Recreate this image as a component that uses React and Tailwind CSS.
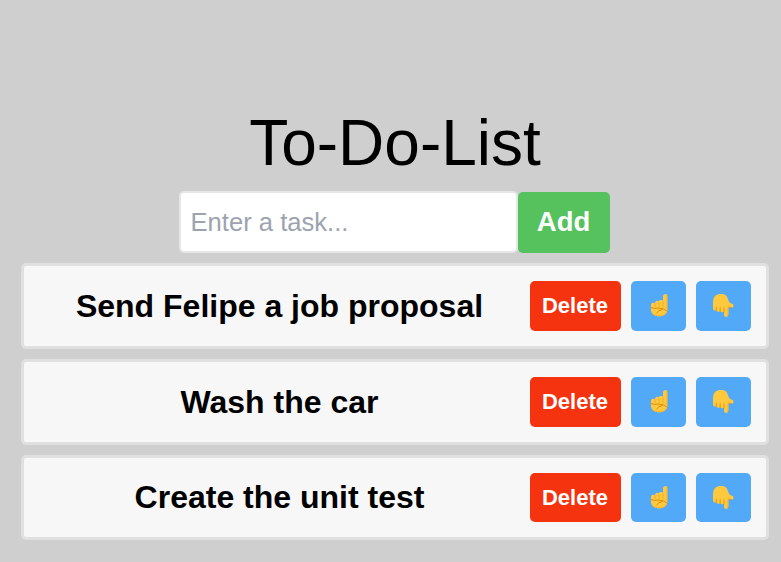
const tasks = [
  { text: "Send Felipe a job proposal", card: "h-[86px]", label: "leading-[48px]", remove: "pb-[2px]" },
  { text: "Wash the car", card: "h-[86px]", label: "leading-[48px]", remove: "pb-[2px]" },
  { text: "Create the unit test", card: "h-[85px]", label: "leading-[48px] pb-px", remove: "pb-0" },
];

function HandUp() {
  return (
    <svg className="h-[23px] w-[17px]" viewBox="0 0 51 69" aria-hidden="true">
      <path d="M36 6Q37 0 43 0Q49 0 49 6V46C49 60 39 67 25 67C10 67 0 60 0 46V32Q0 26 6 26Q10 26 12 28Q12 20 18 20Q22 20 24 22Q24 18 30 18Q34 18 36 20Z" fill="#ffc83d" />
      <path d="M46 1Q49 2 49 7V46C49 60 39 67 25 67C12 67 4 62 1 54C6 61 14 64 24 64C38 64 46 57 46 45Z" fill="#f5b82e" />
      <path d="M12 30V40M24 25V40M36 23V40" fill="none" stroke="#e59a18" strokeWidth="1.800" />
      <path d="M1 41Q11 45 22 42L38 45Q43 46 45 50M34 46Q23 48 17 57" fill="none" stroke="#d67d00" strokeWidth="2.4" strokeLinecap="round" />
    </svg>
  );
}

function HandDown() {
  return (
    <svg className="h-[23px] w-[21px]" viewBox="0 0 63 69" aria-hidden="true">
      <path d="M0 23C1 7 10 0 24 0C36 0 41 5 44 13L48 23Q51 28 57 29Q62 30 62 35Q61 41 55 41L46 39V62Q45 69 39 69Q33 68 33 62V53Q29 56 25 54Q23 53 22 51Q20 54 15 53Q11 53 10 49Q8 51 4 49Q0 47 0 41Z" fill="#ffc83d" />
      <path d="M10 49V40M21.500 51V41M33 55V42" fill="none" stroke="#d67d00" strokeWidth="2" strokeLinecap="round" />
      <path d="M46 39L57 41" fill="none" stroke="#e08f10" strokeWidth="2" />
      <path d="M44.500 39V62Q44 67 40 68" fill="none" stroke="#f5b82e" strokeWidth="3" />
    </svg>
  );
}

function TaskCard({ task }) {
  return (
    <li className={`flex items-stretch gap-[10px] rounded-[5px] border-[3px] border-[#e0e0e0] bg-[#f7f7f7] p-[15px] ${task.card}`}>
      <span className={`flex flex-1 items-center justify-center whitespace-nowrap text-[32px] font-bold ${task.label}`}>
        {task.text}
      </span>
      <button className={`w-[91px] rounded-[5px] bg-[#f5330f] pr-px text-[22px] font-bold text-white ${task.remove}`}>Delete</button>
      <button aria-label="Move up" className="flex w-[55px] items-start justify-center rounded-[5px] bg-[#52a9f7] pt-[13px] pl-px">
        <HandUp />
      </button>
      <button aria-label="Move down" className="flex w-[55px] items-start justify-center rounded-[5px] bg-[#52a9f7] pt-[13px]">
        <HandDown />
      </button>
    </li>
  );
}

export default function App() {
  return (
    <main className="h-[562px] overflow-hidden bg-[#cfcfcf] pr-3 pl-[21px] font-['Liberation_Sans',Arial,sans-serif] text-black">
      <h1 className="pt-[111px] text-center text-[64px] leading-[64px]">To-Do-List</h1>
      <div className="mt-4 flex justify-center pr-[2px]">
        <input
          type="text"
          placeholder="Enter a task..."
          className="h-[62px] w-[339px] rounded-[5px] border-2 border-[#e6e6e6] bg-white px-[10px] text-[25.6px] placeholder:text-[#9ca3af]"
        />
        <button className="mt-px h-[61px] w-[92px] rounded-[5px] bg-[#55c25e] pb-[2px] text-[27.5px] font-bold text-white">Add</button>
      </div>
      <ul className="mt-[10px] flex flex-col gap-[10px]">
        {tasks.map((task) => (
          <TaskCard key={task.text} task={task} />
        ))}
      </ul>
    </main>
  );
}
